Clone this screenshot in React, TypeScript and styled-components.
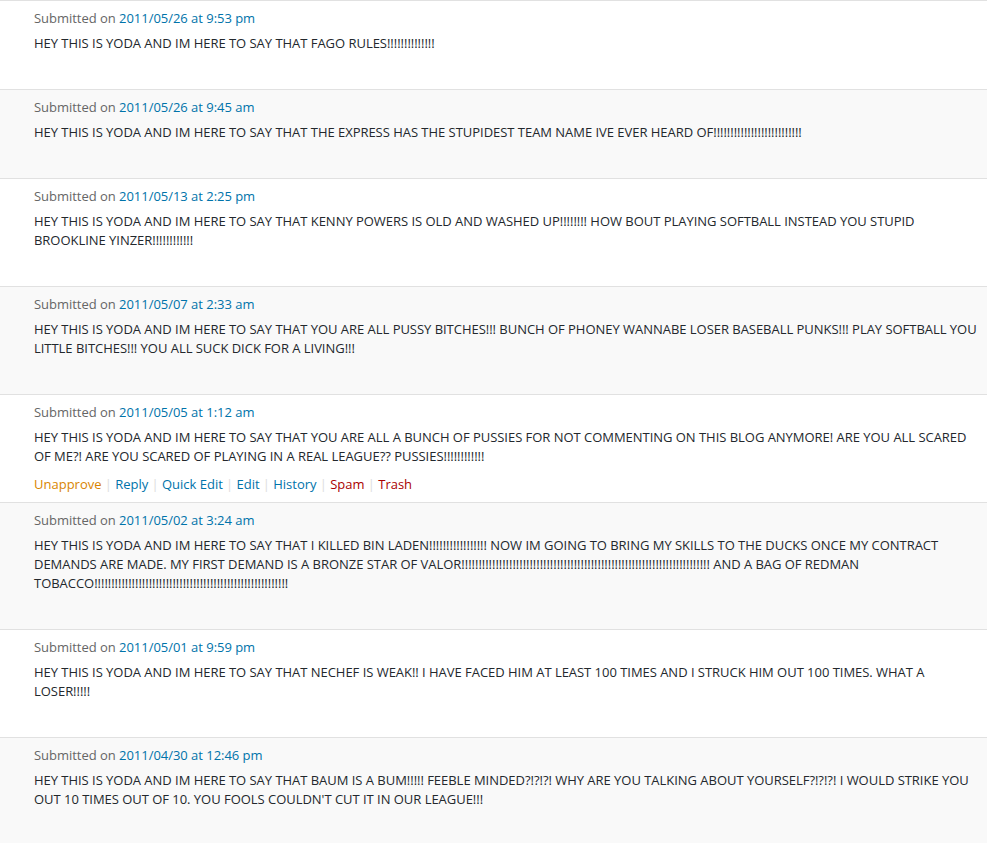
import React from "react";
import styled, { createGlobalStyle } from "styled-components";

const Global = createGlobalStyle`
  html, body { margin: 0; padding: 0; background: #fff; }
  body { font-family: "Open Sans", "Liberation Sans", sans-serif; font-size: 13px; color: #32373c; }
`;

const List = styled.div`
  width: 987px;
  display: flex;
  flex-direction: column;
`;

const Row = styled.div<{ $alt: boolean }>`
  border-top: 1px solid #e1e1e1;
  background: ${(p) => (p.$alt ? "#f9f9f9" : "#fff")};
  padding: 8px 10px 8px 34px;
  line-height: 19px;
  letter-spacing: -0.03px;
`;

const Submitted = styled.div`
  color: #666;
`;

const Link = styled.a`
  color: #0073aa;
  text-decoration: none;
`;

const Body = styled.p`
  margin: 6px 0 9px;
  color: #23282d;
`;

const Actions = styled.div<{ $show: boolean }>`
  display: flex;
  align-items: center;
  visibility: ${(p) => (p.$show ? "visible" : "hidden")};
  height: 19px;
  letter-spacing: 0;
`;

const Action = styled.a<{ $tone: "warn" | "link" | "danger" }>`
  text-decoration: none;
  color: ${(p) => (p.$tone === "warn" ? "#d98500" : p.$tone === "danger" ? "#a00" : "#0073aa")};
`;

const Sep = styled.span`
  color: #ddd;
  margin: 0 3.25px;
`;

const comments = [
  { date: "2011/05/26 at 9:53 pm", text: "HEY THIS IS YODA AND IM HERE TO SAY THAT FAGO RULES!!!!!!!!!!!!!!" },
  { date: "2011/05/26 at 9:45 am", text: "HEY THIS IS YODA AND IM HERE TO SAY THAT THE EXPRESS HAS THE STUPIDEST TEAM NAME IVE EVER HEARD OF!!!!!!!!!!!!!!!!!!!!!!!!!!" },
  { date: "2011/05/13 at 2:25 pm", text: "HEY THIS IS YODA AND IM HERE TO SAY THAT KENNY POWERS IS OLD AND WASHED UP!!!!!!!! HOW BOUT PLAYING SOFTBALL INSTEAD YOU STUPID BROOKLINE YINZER!!!!!!!!!!!!" },
  { date: "2011/05/07 at 2:33 am", text: "HEY THIS IS YODA AND IM HERE TO SAY THAT YOU ARE ALL PUSSY BITCHES!!! BUNCH OF PHONEY WANNABE LOSER BASEBALL PUNKS!!! PLAY SOFTBALL YOU LITTLE BITCHES!!! YOU ALL SUCK DICK FOR A LIVING!!!" },
  { date: "2011/05/05 at 1:12 am", text: "HEY THIS IS YODA AND IM HERE TO SAY THAT YOU ARE ALL A BUNCH OF PUSSIES FOR NOT COMMENTING ON THIS BLOG ANYMORE! ARE YOU ALL SCARED OF ME?! ARE YOU SCARED OF PLAYING IN A REAL LEAGUE?? PUSSIES!!!!!!!!!!!!", show: true },
  { date: "2011/05/02 at 3:24 am", text: "HEY THIS IS YODA AND IM HERE TO SAY THAT I KILLED BIN LADEN!!!!!!!!!!!!!!!!! NOW IM GOING TO BRING MY SKILLS TO THE DUCKS ONCE MY CONTRACT DEMANDS ARE MADE. MY FIRST DEMAND IS A BRONZE STAR OF VALOR!!!!!!!!!!!!!!!!!!!!!!!!!!!!!!!!!!!!!!!!!!!!!!!!!!!!!!!!!!!!!!!!!!!!!!!!! AND A BAG OF REDMAN TOBACCO!!!!!!!!!!!!!!!!!!!!!!!!!!!!!!!!!!!!!!!!!!!!!!!!!!!!!!!!!" },
  { date: "2011/05/01 at 9:59 pm", text: "HEY THIS IS YODA AND IM HERE TO SAY THAT NECHEF IS WEAK!! I HAVE FACED HIM AT LEAST 100 TIMES AND I STRUCK HIM OUT 100 TIMES. WHAT A LOSER!!!!!" },
  { date: "2011/04/30 at 12:46 pm", text: "HEY THIS IS YODA AND IM HERE TO SAY THAT BAUM IS A BUM!!!!! FEEBLE MINDED?!?!?! WHY ARE YOU TALKING ABOUT YOURSELF?!?!?! I WOULD STRIKE YOU OUT 10 TIMES OUT OF 10. YOU FOOLS COULDN'T CUT IT IN OUR LEAGUE!!!" },
];

const actions: { label: string; tone: "warn" | "link" | "danger" }[] = [
  { label: "Unapprove", tone: "warn" },
  { label: "Reply", tone: "link" },
  { label: "Quick Edit", tone: "link" },
  { label: "Edit", tone: "link" },
  { label: "History", tone: "link" },
  { label: "Spam", tone: "danger" },
  { label: "Trash", tone: "danger" },
];

export default function App() {
  return (
    <>
      <Global />
      <List>
        {comments.map((c, i) => (
          <Row key={i} $alt={i % 2 === 1}>
            <Submitted>
              Submitted on <Link href="#">{c.date}</Link>
            </Submitted>
            <Body>{c.text}</Body>
            <Actions $show={!!c.show}>
              {actions.map((a, j) => (
                <React.Fragment key={a.label}>
                  {j > 0 && <Sep>|</Sep>}
                  <Action href="#" $tone={a.tone}>{a.label}</Action>
                </React.Fragment>
              ))}
            </Actions>
          </Row>
        ))}
      </List>
    </>
  );
}
